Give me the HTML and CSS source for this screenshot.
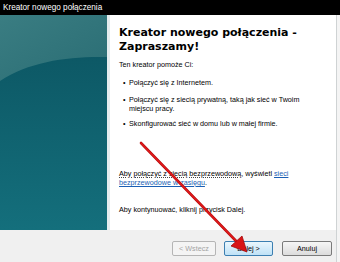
FILE: index.html
```html
<!DOCTYPE html>
<html lang="pl">
<head>
<meta charset="utf-8">
<title>Kreator nowego połączenia</title>
<link rel="stylesheet" href="styles.css">
</head>
<body>
<div class="window">
  <div class="titlebar">Kreator nowego połączenia</div>
  <div class="frame">
    <div class="main">
      <div class="side">
        <svg class="side-art" width="107" height="215" viewBox="0 0 107 215" preserveAspectRatio="none">
          <defs>
            <linearGradient id="tealMain" x1="0" y1="0" x2="0" y2="1">
              <stop offset="0" stop-color="#0b5360"/>
              <stop offset="1" stop-color="#146f7c"/>
            </linearGradient>
            <linearGradient id="tealTop" x1="0" y1="0" x2="1" y2="1">
              <stop offset="0" stop-color="#3a7d82"/>
              <stop offset="1" stop-color="#2a6d74"/>
            </linearGradient>
          </defs>
          <rect x="0" y="0" width="107" height="215" fill="url(#tealMain)"/>
          <path d="M0 0 H107 V42 C70 41 30 46 0 66 Z" fill="url(#tealTop)"/>
        </svg>
      </div>
      <div class="divider"></div>
      <div class="content">
        <h1 class="heading">Kreator nowego połączenia - Zapraszamy!</h1>
        <p class="intro">Ten kreator pomoże Ci:</p>
        <ul class="tasks">
          <li>Połączyć się z Internetem.</li>
          <li>Połączyć się z siecią prywatną, taką jak sieć w Twoim miejscu pracy.</li>
          <li>Skonfigurować sieć w domu lub w małej firmie.</li>
        </ul>
        <p class="wireless"><span class="focus">Aby połączyć z siecią bezprzewodową,</span> wyświetl <a class="link" href="#">sieci bezprzewodowe w zasięgu</a>.</p>
        <p class="continue">Aby kontynuować, kliknij przycisk Dalej.</p>
      </div>
    </div>
    <div class="footer">
      <button class="btn btn-back" disabled>&lt; Wstecz</button>
      <button class="btn btn-next">Dalej &gt;</button>
      <button class="btn btn-cancel">Anuluj</button>
    </div>
  </div>
  <svg class="arrow" width="340" height="262" viewBox="0 0 340 262">
    <line x1="141" y1="143" x2="238" y2="243" stroke="#b50d0d" stroke-width="2.6" stroke-linecap="round"/>
    <line x1="141" y1="143" x2="238" y2="243" stroke="#e3191b" stroke-width="1.4" stroke-linecap="round"/>
    <polygon points="247,252 231,246 242,236" fill="#d81416" stroke="#a30b0b" stroke-width="0.8" stroke-linejoin="round"/>
  </svg>
</div>
</body>
</html>
```

FILE: styles.css
```css
html, body {
  margin: 0;
  padding: 0;
}

body {
  width: 340px;
  height: 262px;
  overflow: hidden;
  background: #f4f4f4;
  font-family: "Liberation Sans", Arial, sans-serif;
  font-size: 7.2px;
  color: #000;
}

.window {
  position: relative;
  width: 340px;
  height: 262px;
  display: flex;
  flex-direction: column;
}

.titlebar {
  height: 15px;
  line-height: 16px;
  background: #000;
  color: #fff;
  font-size: 8.2px;
  padding-left: 3px;
  flex: none;
}

.frame {
  width: 336px;
  flex: 1;
  display: flex;
  flex-direction: column;
  border-right: 1px solid #cfd3d4;
}

.main {
  height: 215px;
  display: flex;
  flex: none;
}

.side {
  width: 107px;
  flex: none;
  line-height: 0;
}

.side-art {
  display: block;
}

.divider {
  width: 3px;
  flex: none;
  background: #e4ecee;
}

.content {
  flex: 1;
  background: #fff;
  padding: 11px 16px 0 9px;
  line-height: 9px;
}

.heading {
  margin: 0;
  font-family: "DejaVu Sans", Verdana, sans-serif;
  font-weight: bold;
  font-size: 11px;
  line-height: 14px;
  width: 200px;
  color: #000;
}

.intro {
  margin: 6px 0 0;
}

.tasks {
  list-style: none;
  margin: 0;
  padding: 0 0 0 4px;
}

.tasks li {
  position: relative;
  padding-left: 6px;
  margin-top: 8px;
}

.tasks li:first-child {
  margin-top: 9px;
}

.tasks li:last-child {
  margin-top: 6px;
}

.tasks li::before {
  content: "\2022";
  position: absolute;
  left: 0;
  top: 0;
}

.wireless {
  margin: 41px 0 0 0;
}

.focus {
  text-decoration: underline dotted #444;
}

.link {
  color: #1a5fb4;
  text-decoration: underline;
}

.continue {
  margin: 18px 0 0 0;
}

.footer {
  flex: 1;
  background: #f0f0f0;
  display: flex;
  justify-content: flex-end;
  align-items: flex-start;
  padding: 11px 4px 0 0;
}

.btn {
  height: 15px;
  padding: 0;
  font-family: "Liberation Sans", Arial, sans-serif;
  font-size: 7.2px;
  line-height: 13px;
  border-radius: 2px;
  text-align: center;
  color: #000;
}

.btn-back {
  width: 44px;
  margin-right: 8px;
  color: #a3a3a3;
  background: #f4f4f4;
  border: 1px solid #b5b5b5;
}

.btn-next {
  width: 49px;
  margin-right: 9px;
  background: linear-gradient(#eaf6fd, #bfe2f6);
  border: 1px solid #3c7fb1;
}

.btn-cancel {
  width: 50px;
  background: linear-gradient(#f6f6f6, #dcdcdc);
  border: 1px solid #7a7a7a;
}

.arrow {
  position: absolute;
  left: 0;
  top: 0;
  pointer-events: none;
}
```
